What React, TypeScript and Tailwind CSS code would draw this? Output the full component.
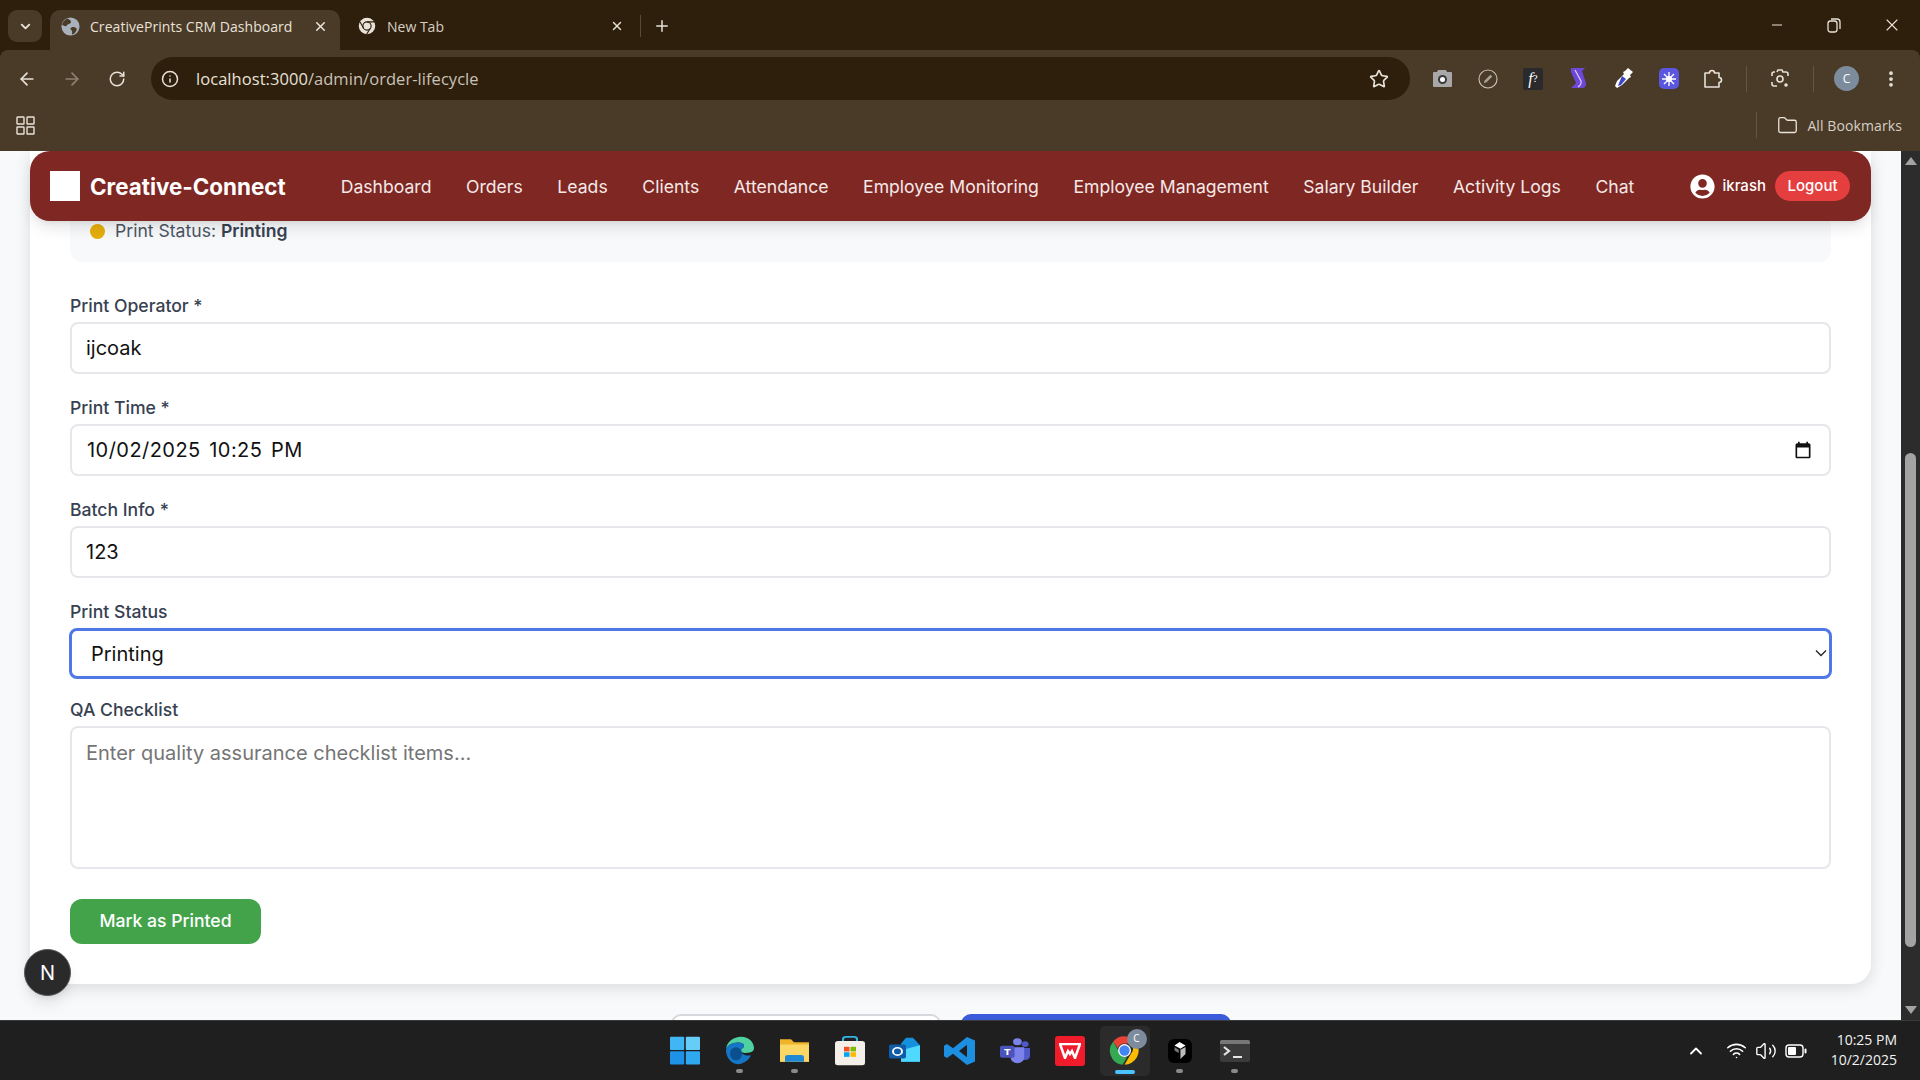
import React from "react";
import {
  ArrowLeft,
  ArrowRight,
  RotateCw,
  Info,
  Star,
  Folder,
  X,
  Plus,
  ChevronDown,
  ChevronUp,
  Minus,
  EllipsisVertical,
  Wifi,
  Volume2,
} from "lucide-react";
import { FaUserCircle } from "react-icons/fa";

const navLinks = [
  "Dashboard",
  "Orders",
  "Leads",
  "Clients",
  "Attendance",
  "Employee Monitoring",
  "Employee Management",
  "Salary Builder",
  "Activity Logs",
  "Chat",
];

function ChromeLogo({ size = 20, mono = false }: { size?: number; mono?: boolean }) {
  if (mono) {
    return (
      <svg width={size} height={size} viewBox="0 0 48 48">
        <circle cx="24" cy="24" r="22" fill="#e8e2d8" />
        <circle cx="24" cy="24" r="11" fill="#4a3a28" fillOpacity="0" stroke="#2e1e0c" strokeWidth="3" />
        <path d="M24 13h19M15 30L5.500 13.500M33 30L23 46" stroke="#2e1e0c" strokeWidth="3" />
      </svg>
    );
  }
  return (
    <svg width={size} height={size} viewBox="0 0 48 48">
      <path d="M24 2a22 22 0 0 1 19 11H24a11 11 0 0 0-10.400 7.400L6.500 10A22 22 0 0 1 24 2z" fill="#ea4335" />
      <path d="M43 13a22 22 0 0 1-19 33l10-17a11 11 0 0 0 0-16z" fill="#fbbc04" />
      <path d="M6.500 10l10 17.500A11 11 0 0 0 28 34.500L21 46A22 22 0 0 1 6.500 10z" fill="#34a853" />
      <circle cx="24" cy="24" r="10" fill="#fff" />
      <circle cx="24" cy="24" r="8" fill="#4285f4" />
    </svg>
  );
}

function GlobeFavicon() {
  return (
    <svg width="19" height="19" viewBox="0 0 20 20">
      <circle cx="10" cy="10" r="9.500" fill="#a9b2ba" />
      <path d="M7 1.500c2 1.500 4 2 3.500 4S7 7 6 9 2.500 9 1 8c.6-3 3-5.500 6-6.500zM11 11c2-1 5 0 5.500 1.500S14 18 12 18.500c-1-2 .5-3-1-4.500s-1.500-2.500 0-3z" fill="#4a3a28" />
    </svg>
  );
}

function ExtensionIcons() {
  return (
    <>
      {/* screenshot camera */}
      <div className="w-[45px] flex justify-center">
        <svg width="19" height="17" viewBox="0 0 19 17">
          <path d="M5 0h8l1 2h4a1 1 0 0 1 1 1v13a1 1 0 0 1-1 1H1a1 1 0 0 1-1-1V3a1 1 0 0 1 1-1h3z" fill="#a8a8a8" />
          <circle cx="9.500" cy="9.500" r="4.500" fill="#3a3a3a" />
          <circle cx="9.500" cy="9.500" r="2.500" fill="#fff" />
        </svg>
      </div>
      {/* compass */}
      <div className="w-[45px] flex justify-center">
        <svg width="20" height="20" viewBox="0 0 21 21">
          <circle cx="10.500" cy="10.500" r="9.500" fill="none" stroke="#c8c0b4" strokeWidth="1.200" />
          <path d="M13 6l2 2-6 6-3 1 1-3z" fill="#a8a29a" />
        </svg>
      </div>
      {/* font identifier */}
      <div className="w-[46px] flex justify-center">
        <div className="w-5 h-[22px] bg-[#2a2a2c] rounded-[2px] flex items-center justify-center text-white text-[16px] leading-none italic font-['Liberation_Serif',serif]">
          f<span className="text-[11px] not-italic">?</span>
        </div>
      </div>
      {/* purple S */}
      <div className="w-[45px] flex justify-center">
        <svg width="17" height="21" viewBox="0 0 17 21">
          <path d="M1 0h14l-3 3 4 12c.3 2-1 5-3 5H1l5-5L1 4z" fill="#6d47d9" />
          <path d="M5 2l6 11c.5 2 0 4-3 6" fill="none" stroke="#d8ccf5" strokeWidth="1.300" />
        </svg>
      </div>
      {/* eye dropper */}
      <div className="w-[45px] flex justify-center">
        <svg width="20" height="21" viewBox="0 0 20 21">
          <path d="M14 0l5 4-3 3 1 2-2 1-7 7-5 3-2-2 2-5 7-7-1-2 2-1z" fill="#fff" />
          <path d="M8 8l4 3-5 6-3 1 1-3z" fill="#3f46c9" />
        </svg>
      </div>
      {/* purple gear */}
      <div className="w-[45px] flex justify-center">
        <div className="w-5 h-[21px] bg-[#5a56e0] rounded-[5px] flex items-center justify-center">
          <svg width="14" height="14" viewBox="0 0 16 16">
            <g stroke="#fff" strokeWidth="1.500">
              <path d="M8 0v16M0 8h16M2.300 2.300l11.400 11.400M13.700 2.300L2.300 13.700" />
            </g>
            <circle cx="8" cy="8" r="3.500" fill="#fff" />
          </svg>
        </div>
      </div>
    </>
  );
}

function ChromeBar() {
  return (
    <div className="shrink-0 bg-[#2e1e0c] text-[#e8e2d8] font-['Open_Sans',sans-serif]">
      <div className="h-[50px] flex items-start pl-2 relative">
        <div className="mt-[10px] w-[34px] h-[32px] bg-[#4a3a28] rounded-[9px] flex items-center justify-center">
          <ChevronDown size={15} strokeWidth={3} />
        </div>
        <div className="mt-[10px] ml-2 w-[290px] h-[40px] bg-[#4a3a28] rounded-t-[10px] flex items-center pl-[11px] pb-[8px]">
          <GlobeFavicon />
          <span className="ml-[10px] text-[14px] w-[213px] whitespace-nowrap tracking-[0.050px]">CreativePrints CRM Dashboard</span>
          <X size={15} strokeWidth={2.5} className="ml-[10px]" />
        </div>
        <div className="mt-[10px] h-[40px] flex items-center pb-[8px]">
          <div className="ml-[18px]">
            <ChromeLogo size={18} mono />
          </div>
          <span className="ml-[11px] text-[14px] w-[223px] text-[#d6cfc4]">New Tab</span>
          <X size={14} strokeWidth={2.5} />
          <div className="ml-[16px] w-px h-[22px] bg-[#5b4a38]" />
          <Plus size={18} strokeWidth={2} className="ml-[12px]" />
        </div>
        <div className="ml-auto flex h-full items-center pr-[18px]">
          <Minus size={16} strokeWidth={1.5} className="mr-[42px]" />
          <svg width="14" height="16" viewBox="0 0 14 16" className="mr-[41px]">
            <rect x="1" y="4" width="9" height="11" rx="2.500" fill="none" stroke="#e8e2d8" strokeWidth="1.300" />
            <path d="M4 2h6a3 3 0 0 1 3 3v7" fill="none" stroke="#e8e2d8" strokeWidth="1.300" />
          </svg>
          <X size={20} strokeWidth={1.3} />
        </div>
      </div>

      <div className="h-[101px] bg-[#4a3a28] rounded-t-[8px]">
        <div className="h-[57px] flex items-center">
          <ArrowLeft size={20} className="ml-[17px]" />
          <ArrowRight size={20} className="ml-[25px] text-[#8f8272]" />
          <RotateCw size={18} className="ml-[26px]" />
          <div className="ml-[25px] w-[1259px] h-[43px] bg-[#2e1e0c] rounded-full flex items-center pl-[10px] pr-[21px]">
            <Info size={18} />
            <span className="ml-[17px] mt-px text-[16.500px] text-[#e8e2d8] tracking-[0.050px]">
              localhost:3000<span className="text-[#c9c2b8]">/admin/order-lifecycle</span>
            </span>
            <Star size={20} className="ml-auto" />
          </div>
          <div className="ml-[10px] flex items-center">
            <ExtensionIcons />
            <svg width="21" height="21" viewBox="0 0 21 21" className="ml-[12px]">
              <path
                d="M2 5h4.500a2.500 2.500 0 0 1 5 0H16v4.500a2.500 2.500 0 0 1 0 5V19H2z"
                fill="none"
                stroke="#e8e2d8"
                strokeWidth="1.600"
                strokeLinejoin="round"
              />
            </svg>
            <div className="ml-[22px] w-px h-[26px] bg-[#65553f]" />
            <svg width="20" height="20" viewBox="0 0 20 20" className="ml-[23px]">
              <path
                d="M5 3H4a2 2 0 0 0-2 2v2M15 3h1a2 2 0 0 1 2 2v2M2 13v2a2 2 0 0 0 2 2h3M7 3l1-2h4l1 2h2"
                fill="none"
                stroke="#e8e2d8"
                strokeWidth="1.600"
              />
              <circle cx="10" cy="10" r="3" fill="none" stroke="#e8e2d8" strokeWidth="1.600" />
              <circle cx="16" cy="16" r="1.800" fill="#e8e2d8" />
            </svg>
            <div className="ml-[23px] w-px h-[26px] bg-[#65553f]" />
            <div className="ml-[20px] w-[25px] h-[25px] rounded-full bg-[#7c8c9c] flex items-center justify-center text-[12px] text-white">
              C
            </div>
            <EllipsisVertical size={20} strokeWidth={2.5} className="ml-[22px]" />
          </div>
        </div>
        <div className="h-[36px] flex items-center pr-[18px]">
          <svg width="19" height="19" viewBox="0 0 19 19" className="ml-4">
            <g fill="none" stroke="#e8e2d8" strokeWidth="1.400">
              <rect x="1" y="1" width="7" height="7" rx="0.500" />
              <rect x="11" y="1" width="7" height="7" rx="0.500" />
              <rect x="1" y="11" width="7" height="7" rx="0.500" />
              <rect x="11" y="11" width="7" height="7" rx="0.500" />
            </g>
          </svg>
          <div className="ml-auto w-px h-[26px] bg-[#65553f]" />
          <Folder size={21} strokeWidth={1.5} className="ml-[20px]" />
          <span className="ml-[9px] text-[14px] text-[#d6cfc4] tracking-[0.100px]">All Bookmarks</span>
        </div>
      </div>
    </div>
  );
}

function Navbar() {
  return (
    <nav className="absolute top-0 inset-x-0 mx-[30px] h-[70px] pt-[2px] bg-[#7f2723] rounded-[20px] shadow-lg flex items-center pl-5 pr-[21px] text-white font-['Inter',sans-serif]">
      <div className="w-[30px] h-[30px] bg-white -mt-[2px]" />
      <span className="ml-[10px] text-[22.400px] font-bold whitespace-nowrap">Creative-Connect</span>
      <div className="ml-[55px] flex gap-[34.600px] text-[17.600px] text-[#f5e9e8] whitespace-nowrap">
        {navLinks.map((link) => (
          <a key={link} href="#">
            {link}
          </a>
        ))}
      </div>
      <div className="ml-auto flex items-center -mt-[2px]">
        <FaUserCircle size={25} />
        <span className="ml-[7px] text-[15px] font-medium">ikrash</span>
        <button className="ml-[9px] w-[75px] h-[30px] bg-[#e53e3e] rounded-full text-[15px] font-medium text-white">
          Logout
        </button>
      </div>
    </nav>
  );
}

function Field({ label, children, top = "mt-[21px]" }: { label: string; children: React.ReactNode; top?: string }) {
  return (
    <div className={top}>
      <label className="block h-6 leading-[26px] mb-[5px] text-[17.600px] font-[450] text-[#374151]">{label}</label>
      {children}
    </div>
  );
}

const inputCls =
  "block w-full h-[52px] px-[14px] bg-white border-2 border-[#e5e7eb] rounded-[8px] text-[20px] text-[#111] outline-none font-['Inter',sans-serif]";

function OrderForm() {
  return (
    <div className="mx-[30px] bg-white rounded-b-[20px] shadow-[0_4px_16px_rgba(0,0,0,0.12)] px-10 pb-10 font-['Inter',sans-serif]">
      <div className="h-[111px] bg-[#f8f9fb] rounded-b-[12px] flex items-end pl-5 pb-[21px]">
        <div className="flex items-center">
          <span className="w-[15px] h-[15px] rounded-full bg-[#e6ad0c]" />
          <span className="ml-[10px] text-[17.600px] leading-5 text-[#4b5563]">
            Print Status: <b className="font-semibold text-[#374151]">Printing</b>
          </span>
        </div>
      </div>

      <Field label="Print Operator *" top="mt-[31px]">
        <input className={inputCls} defaultValue="ijcoak" />
      </Field>
      <Field label="Print Time *">
        <div className="relative">
          <input
            className={`${inputCls} pl-[15px] tracking-[0.450px] [word-spacing:2.500px]`}
            defaultValue="10/02/2025 10:25 PM"
          />
          <svg width="20" height="20" viewBox="0 0 24 24" className="absolute right-[18px] top-4">
            <path
              d="M19 4h-1V2h-2v2H8V2H6v2H5c-1.100 0-2 .9-2 2v14c0 1.100.9 2 2 2h14c1.100 0 2-.9 2-2V6c0-1.100-.9-2-2-2zm0 16H5V9h14v11z"
              fill="#111"
            />
          </svg>
        </div>
      </Field>
      <Field label="Batch Info *">
        <input className={inputCls} defaultValue="123" />
      </Field>
      <Field label="Print Status">
        <div className="relative">
          <select
            defaultValue="Printing"
            className="appearance-none block w-[calc(100%+2px)] -ml-px h-[51px] pl-[19px] pr-1 bg-white border-[3px] border-[#4f78e6] rounded-[8px] text-[20px] text-[#111] outline-none"
          >
            <option>Printing</option>
            <option>Printed</option>
          </select>
          <svg width="12" height="8" viewBox="0 0 12 8" className="absolute right-[4px] top-[21px]">
            <path d="M1 1.500l5 5 5-5" fill="none" stroke="#222" strokeWidth="1.300" />
          </svg>
        </div>
      </Field>
      <Field label="QA Checklist" top="mt-[18px]">
        <textarea
          className="block w-full h-[143px] px-[14px] py-[10px] bg-white border-2 border-[#e5e7eb] rounded-[8px] text-[20px] outline-none resize-none placeholder:text-[#757575]"
          placeholder="Enter quality assurance checklist items..."
        />
      </Field>
      <button className="mt-[30px] block w-[191px] h-[45px] bg-[#43a34b] rounded-[12px] text-white text-[17.600px] font-medium">
        Mark as Printed
      </button>
    </div>
  );
}

function Taskbar() {
  return (
    <div className="shrink-0 h-[60px] bg-[#1f1f1f] border-t border-[#3a3a3a] relative flex items-center font-['Open_Sans',sans-serif]">
      <div className="ml-[657px] flex items-center h-full">
        <TaskIcon>
          <svg width="30" height="29" viewBox="0 0 30 36" preserveAspectRatio="none">
            <rect y="1" width="14.200" height="16.500" rx="1" fill="#41b6f4" />
            <rect x="15.800" y="1" width="14.200" height="16.500" rx="1" fill="#66cdf8" />
            <rect y="19" width="14.200" height="16.500" rx="1" fill="#1e92e6" />
            <rect x="15.800" y="19" width="14.200" height="16.500" rx="1" fill="#2fa8ef" />
          </svg>
        </TaskIcon>
        <TaskIcon pip>
          <svg width="31" height="29" viewBox="0 0 31 36" preserveAspectRatio="none">
            <path d="M2 18C2 7 10 1 17 1c8 0 13 7 13 14 0 5-4 6-8 6-4 0-5-1-5-3 0-3 3-3 3-6s-3-4-6-4C8 8 2 12 2 18z" fill="#4fd1a1" />
            <path d="M2 18c0-6 6-10 12-10 3 0 6 1 6 4s-3 3-3 6c0 5 5 7 10 6-2 6-8 11-13 11C7 35 2 26 2 18z" fill="#1476c4" />
            <ellipse cx="12" cy="22" rx="6" ry="8" fill="#0c4f8f" />
          </svg>
        </TaskIcon>
        <TaskIcon pip>
          <svg width="31" height="27" viewBox="0 0 31 36" preserveAspectRatio="none">
            <path d="M1 3h11l3 4h15v26H1z" fill="#f0b429" />
            <path d="M1 10h29v23H1z" fill="#fbd766" />
            <path d="M6 33v-6a3 3 0 0 1 3-3h13a3 3 0 0 1 3 3v6z" fill="#1f89d6" />
          </svg>
        </TaskIcon>
        <TaskIcon>
          <svg width="30" height="30" viewBox="0 0 30 36" preserveAspectRatio="none">
            <path d="M8 8V4a3 3 0 0 1 3-3h8a3 3 0 0 1 3 3v4" fill="none" stroke="#35b3e6" strokeWidth="2" />
            <rect y="6" width="30" height="29" rx="3" fill="#f4efe9" />
            <rect x="9" y="13" width="5.500" height="5.500" fill="#f25022" />
            <rect x="15.500" y="13" width="5.500" height="5.500" fill="#7fba00" />
            <rect x="9" y="19.500" width="5.500" height="5.500" fill="#00a4ef" />
            <rect x="15.500" y="19.500" width="5.500" height="5.500" fill="#ffb900" />
          </svg>
        </TaskIcon>
        <TaskIcon>
          <svg width="31" height="28" viewBox="0 0 31 34" preserveAspectRatio="none">
            <path d="M17 1h7l7 9v20H12V8z" fill="#1490df" />
            <path d="M12 16l19-6v20H12z" fill="#50d9ff" />
            <rect y="9" width="17" height="17" rx="2" fill="#0f5ca8" />
            <circle cx="8.500" cy="17.500" r="4.500" fill="none" stroke="#fff" strokeWidth="2" />
          </svg>
        </TaskIcon>
        <TaskIcon>
          <svg width="31" height="30" viewBox="0 0 31 34" preserveAspectRatio="none">
            <path d="M23 1l8 4v24l-8 4L9 20l-6 5-3-2V11l3-2 6 5zM23 10l-8 7 8 7z" fill="#1c8fe0" fillRule="evenodd" />
          </svg>
        </TaskIcon>
        <TaskIcon>
          <svg width="30" height="27" viewBox="0 0 31 34" preserveAspectRatio="none">
            <circle cx="18" cy="6" r="4.500" fill="#7b83eb" />
            <circle cx="26" cy="9" r="3.500" fill="#5059c9" />
            <path d="M22 14h9v10a5 5 0 0 1-9 3z" fill="#5059c9" />
            <path d="M9 13h16v13a7 7 0 0 1-14 0z" fill="#7b83eb" />
            <rect y="11" width="15" height="15" rx="2" fill="#4b53bc" />
            <text x="7.500" y="23" textAnchor="middle" fontSize="12" fontWeight="700" fill="#fff">T</text>
          </svg>
        </TaskIcon>
        <TaskIcon>
          <div className="w-[30px] h-[30px] rounded-[3px] bg-[#f01c2c] flex items-center justify-center">
            <svg width="22" height="16" viewBox="0 0 22 16">
              <path d="M1 1h20l-5 14-3-7-2 3-2-3-3 7z" fill="none" stroke="#fff" strokeWidth="2.500" />
            </svg>
          </div>
        </TaskIcon>
        <div className="w-[50px] h-[50px] mx-[2.500px] rounded-[5px] bg-[#2b2b2b] flex items-center justify-center relative">
          <ChromeLogo size={31} />
          <span className="absolute top-[3px] right-[3px] w-[20px] h-[20px] rounded-full bg-[#7c8c9c] text-white text-[10px] flex items-center justify-center">
            C
          </span>
          <span className="absolute bottom-[2px] left-[15px] w-[20px] h-[4px] rounded-full bg-[#4cc2ff]" />
        </div>
        <TaskIcon pip>
          <div className="w-[24px] h-[24px] rounded-[6px] bg-black flex items-center justify-center">
            <svg width="12" height="17" viewBox="0 0 13 20">
              <path d="M0 4l6-4 7 4-6 4z" fill="#fff" />
              <path d="M7 9l6-3v8l-6 6z" fill="#bbb" />
              <path d="M0 6l5 3v4l-5-3z" fill="#777" />
            </svg>
          </div>
        </TaskIcon>
        <TaskIcon pip>
          <div className="w-[30px] h-[22px] bg-[#3b3b3b] rounded-[2px] relative overflow-hidden">
            <div className="h-[4px] w-full bg-[#777]" />
            <svg width="30" height="18" viewBox="0 0 30 18">
              <path d="M4 3l5 4-5 4" fill="none" stroke="#e5e5e5" strokeWidth="2.200" />
              <path d="M13 13h9" stroke="#e5e5e5" strokeWidth="2.200" />
            </svg>
          </div>
        </TaskIcon>
      </div>

      <div className="ml-auto flex items-center text-white pr-[23px]">
        <ChevronUp size={20} strokeWidth={2.2} />
        <Wifi size={21} strokeWidth={1.8} className="ml-5" />
        <Volume2 size={22} strokeWidth={1.5} className="ml-2" />
        <svg width="22" height="14" viewBox="0 0 22 14" className="ml-2">
          <rect x="1" y="1" width="17" height="12" rx="3" fill="none" stroke="#fff" strokeWidth="1.400" />
          <rect x="3" y="3" width="8" height="8" rx="1" fill="#fff" />
          <rect x="19.500" y="4.500" width="2" height="5" rx="1" fill="#fff" />
        </svg>
        <div className="ml-6 -mt-[2px] text-right text-[14px] leading-5 text-[#f2f2f2]">
          <div>10:25 PM</div>
          <div>10/2/2025</div>
        </div>
      </div>
    </div>
  );
}

function TaskIcon({ children, pip = false }: { children: React.ReactNode; pip?: boolean }) {
  return (
    <div className="w-[55px] h-full flex items-center justify-center relative">
      {children}
      {pip && <span className="absolute bottom-[7px] left-[24px] w-[7px] h-[4px] rounded-full bg-[#8a8a8a]" />}
    </div>
  );
}

function Scrollbar() {
  return (
    <div className="w-[19px] shrink-0 bg-[#2c2c2c] flex flex-col items-center">
      <div className="mt-[6px] w-0 h-0 border-x-[6px] border-x-transparent border-b-[8px] border-b-[#a3a3a3]" />
      <div className="mt-[288px] w-[11px] h-[494px] rounded-full bg-[#a3a3a3]" />
      <div className="mt-auto mb-[6px] w-0 h-0 border-x-[6px] border-x-transparent border-t-[8px] border-t-[#a3a3a3]" />
    </div>
  );
}

export default function App() {
  return (
    <div className="h-screen w-full flex flex-col overflow-hidden">
      <ChromeBar />
      <div className="flex-1 min-h-0 flex">
        <main className="flex-1 min-w-0 relative overflow-hidden bg-[#f8f9fb]">
          <OrderForm />
          <div className="mt-[30px] flex justify-center gap-5">
            <button className="w-[270px] h-[45px] bg-white border-2 border-[#d5d8dc] rounded-[10px]" />
            <button className="w-[270px] h-[45px] bg-[#3b5bdb] rounded-[10px]" />
          </div>
          <Navbar />
          {/* next.js dev badge */}
          <div className="absolute left-6 bottom-6 w-[47px] h-[47px] rounded-full bg-[#2a2a2a] border border-[#555] shadow-lg flex items-center justify-center text-white text-[20px] font-['Inter',sans-serif]">
            N
          </div>
        </main>
        <Scrollbar />
      </div>
      <Taskbar />
    </div>
  );
}
